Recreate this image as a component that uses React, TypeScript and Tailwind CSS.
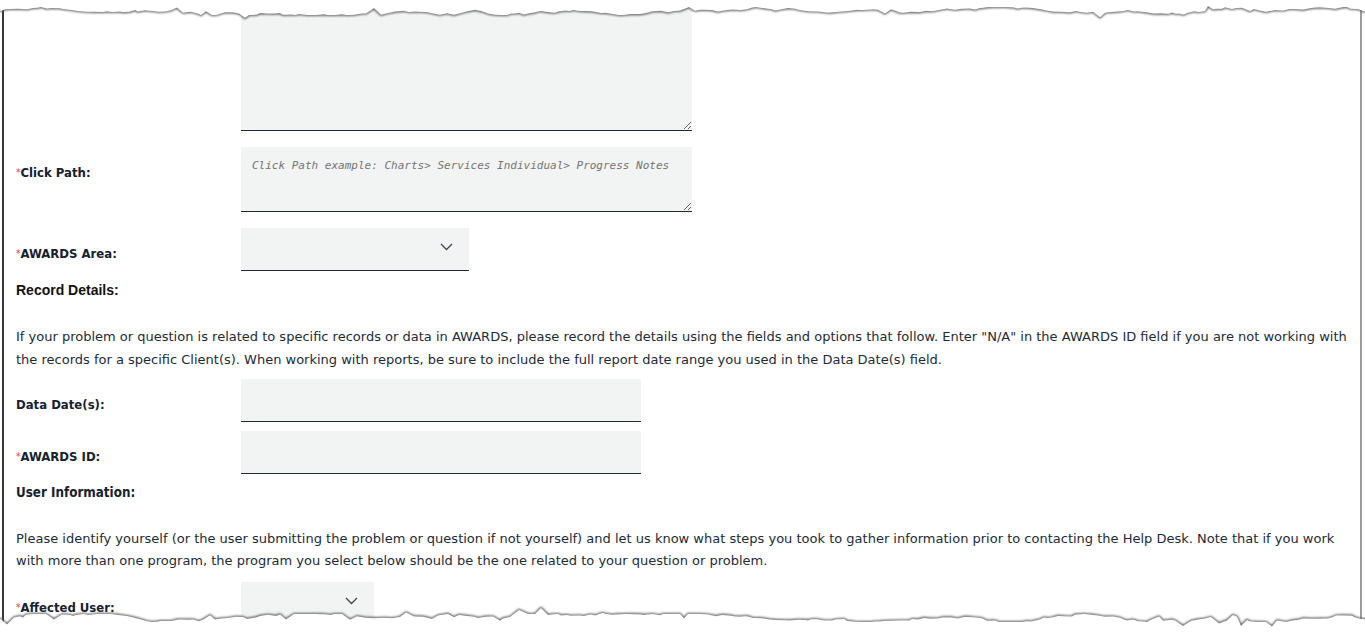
import React from "react";

function rng(seed: number) {
  let s = seed;
  return () => {
    s = (s * 16807) % 2147483647;
    return (s - 1) / 2147483646;
  };
}

function tornPoints(seed: number, base: number, amp: number) {
  const rand = rng(seed);
  const pts: [number, number][] = [];
  let y = base;
  for (let x = -4; x <= 1370; x += 3 + Math.floor(rand() * 7)) {
    y += (rand() - 0.5) * amp * 0.9;
    y = Math.max(base - amp, Math.min(base + amp, y));
    const spike = rand() < 0.08 ? (rand() < 0.5 ? -1 : 1) * (2 + rand() * 4) : 0;
    pts.push([x, +(y + spike).toFixed(1)]);
  }
  return pts;
}

function TornEdge({ side }: { side: "top" | "bottom" }) {
  const top = side === "top";
  const pts = tornPoints(top ? 1234 : 98765, top ? 11 : 618, 4);
  const shifted = top ? pts : pts.map(([x, y]) => [x, y - 600] as [number, number]);
  const line = shifted.map(([x, y], i) => `${i ? "L" : "M"}${x},${y}`).join(" ");
  const fill = top ? `${line} L1370,0 L-4,0 Z` : `${line} L1370,34 L-4,34 Z`;
  return (
    <svg
      width={1365}
      height={top ? 24 : 34}
      className={`pointer-events-none absolute left-0 z-10 ${top ? "top-0" : "top-[600px]"}`}
    >
      <defs>
        <filter id={`blur-${side}`} x="-5%" y="-50%" width="110%" height="200%">
          <feGaussianBlur stdDeviation="0.9" />
        </filter>
      </defs>
      <path d={line} fill="none" stroke="#555" strokeWidth={2.2} filter={`url(#blur-${side})`} />
      <path d={fill} fill="#ffffff" />
    </svg>
  );
}

function Chevron() {
  return (
    <svg width="13" height="8" viewBox="0 0 13 8" fill="none">
      <path d="M1 1l5.5 5.5L12 1" stroke="#3b4754" strokeWidth="1.3" />
    </svg>
  );
}

function Label({ text, required }: { text: string; required?: boolean }) {
  return (
    <div className="w-[225px] shrink-0 pt-[18px] text-[13px] font-bold leading-4 text-[#16222f] [font-family:'DejaVu_Sans_Condensed','DejaVu_Sans',sans-serif]">
      {required ? <span className="align-top text-[10px] font-normal text-[#e0403a]">*</span> : null}
      {text}
    </div>
  );
}

const field = "bg-[#f2f3f3] border-b border-[#1c2b39]";

export default function App() {
  return (
    <div
      className="relative h-[634px] w-[1365px] overflow-hidden bg-white"
      style={{ fontFamily: '"DejaVu Sans", sans-serif' }}
    >
      <TornEdge side="top" />
      <TornEdge side="bottom" />
      <div className="ml-[2px] h-full w-[1360px] border-l-2 border-r-2 border-l-[#3a3a3a] border-r-[#9c9c9c] pl-[12px] text-[#1c2b39]">
        <div className="flex">
          <div className="w-[225px] shrink-0" />
          <textarea className={`${field} block h-[131px] w-[451px] resize-y outline-none`} />
        </div>

        <div className="mt-4 flex">
          <Label text="Click Path:" required />
          <textarea
            placeholder="Click Path example: Charts> Services Individual> Progress Notes"
            className={`${field} block h-[65px] w-[451px] resize-y px-[11px] pt-[12px] text-[11px] leading-[14px] outline-none placeholder:italic placeholder:text-[#747474] [font-family:'DejaVu_Sans_Mono',monospace]`}
          />
        </div>

        <div className="mt-4 flex">
          <Label text="AWARDS Area:" required />
          <div className={`${field} flex h-[43px] w-[228px] items-start justify-end pr-[16px] pt-[15px]`}>
            <Chevron />
          </div>
        </div>

        <div className="mt-[9px] text-[14px] font-bold leading-5 text-[#111] [font-family:'Liberation_Sans',Arial,sans-serif]">
          Record Details:
        </div>

        <p className="mt-[25px] whitespace-nowrap text-[13px] leading-[23px]">
          If your problem or question is related to specific records or data in AWARDS, please record the details using the fields and options that follow. Enter "N/A" in the AWARDS ID field if you are not working with
          <br />
          the records for a specific Client(s). When working with reports, be sure to include the full report date range you used in the Data Date(s) field.
        </p>

        <div className="mt-2 flex">
          <Label text="Data Date(s):" />
          <div className={`${field} h-[43px] w-[400px]`} />
        </div>

        <div className="mt-[9px] flex">
          <Label text="AWARDS ID:" required />
          <div className={`${field} h-[43px] w-[400px]`} />
        </div>

        <div className="mt-[9px] text-[13.3px] font-bold leading-5 text-[#16222f] [font-family:'DejaVu_Sans_Condensed','DejaVu_Sans',sans-serif]">
          User Information:
        </div>

        <p className="mt-[25px] whitespace-nowrap text-[13px] leading-[22px]">
          Please identify yourself (or the user submitting the problem or question if not yourself) and let us know what steps you took to gather information prior to contacting the Help Desk. Note that if you work
          <br />
          with more than one program, the program you select below should be the one related to your question or problem.
        </p>

        <div className="mt-[10px] flex">
          <Label text="Affected User:" required />
          <div className="flex h-[43px] w-[133px] items-start justify-end bg-[#f2f3f3] pr-[16px] pt-[15px]">
            <Chevron />
          </div>
        </div>
      </div>
    </div>
  );
}
